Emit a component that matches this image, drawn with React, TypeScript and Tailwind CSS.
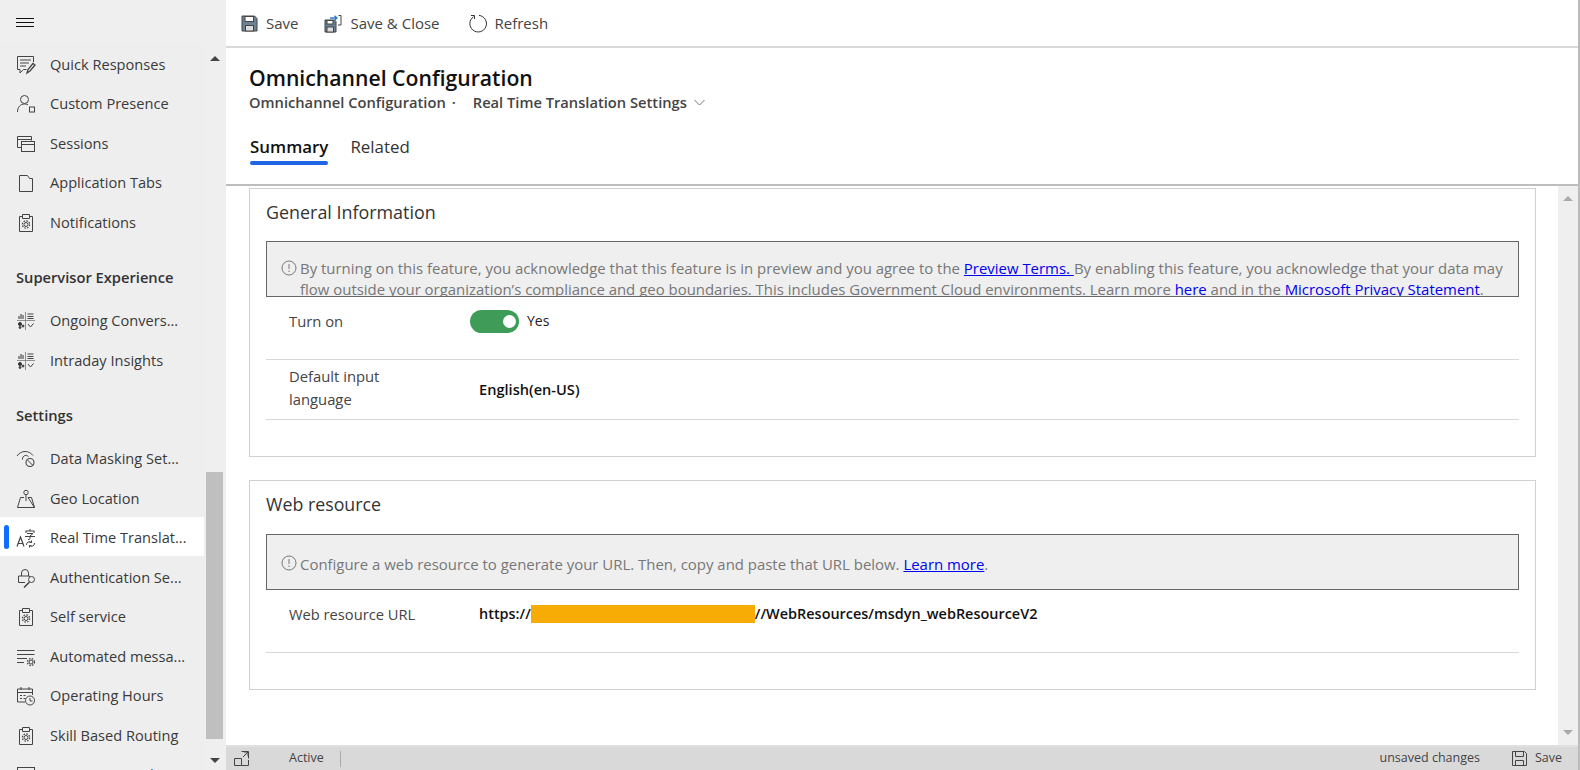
import React from "react";

const font = "font-['Open_Sans','Noto_Sans',sans-serif]";

const S = "#444";
function Ico({ children, w = 20, h = 20 }: { children: React.ReactNode; w?: number; h?: number }) {
  return (
    <svg width={w} height={h} viewBox="0 0 20 20" fill="none" stroke={S} strokeWidth="1" className="shrink-0">
      {children}
    </svg>
  );
}
const IQuick = () => (
  <Ico>
    <path d="M17.5 7V1.500H1.500v13h2.500v3.500l3.500-3.500h3" />
    <path d="M4 5h11M4 8h9M4 11h6" />
    <path d="M11 18l1-3.500 5-6 2 1.500-5 6z" strokeWidth="1.300" />
  </Ico>
);
const IPresence = () => (
  <Ico>
    <circle cx="8.500" cy="5.500" r="4" />
    <path d="M1.500 18c0-5 3-8 7-8 1.500 0 2.500.3 3.500.8" />
    <rect x="13.500" y="13" width="5" height="5" />
  </Ico>
);
const ISessions = () => (
  <Ico>
    <path d="M5.500 13.500h-4V2.500h14v4" />
    <path d="M1.500 5.500h14" />
    <rect x="5.500" y="7.500" width="13" height="10" />
    <path d="M5.500 10.500h13" />
  </Ico>
);
const ITabs = () => (
  <Ico>
    <path d="M3.500 2.500h8l2 3h3v13h-13z" />
  </Ico>
);
const IClip = () => (
  <Ico>
    <path d="M6.500 3.500h-3v15h13v-15h-3" />
    <path d="M6.500 1.500h7v4h-7z" />
    <circle cx="10" cy="11.500" r="2" />
    <circle cx="10" cy="11.500" r="3.600" strokeDasharray="1.600 1.200" strokeWidth="1.200" />
  </Ico>
);
const IGrid = () => (
  <Ico>
    <path d="M9.500 1v18M1 9.500h18" strokeWidth="0.800" stroke="#777" />
    <path d="M3 8V5M5 8V3M7 8V4M11.500 3h6M11.500 5.500h6M11.500 7.500h6" strokeWidth="1.100" />
    <circle cx="4" cy="13" r="1.600" fill="#333" />
    <circle cx="7" cy="15" r="1" fill="#333" />
    <circle cx="4" cy="16.500" r="1" fill="#333" />
    <path d="M12 13l2.500 3 3-3.500" />
  </Ico>
);
const IMask = () => (
  <Ico>
    <path d="M1 7c2-3 5-4.500 8-4.500 3.500 0 6 1.500 8 4" />
    <path d="M6.500 10.500a3.500 3.500 0 0 1 6-3" />
    <circle cx="14" cy="13.500" r="4" strokeWidth="1.100" />
    <path d="M11.200 10.700l5.600 5.600" />
  </Ico>
);
const IGeo = () => (
  <Ico>
    <circle cx="10" cy="3.500" r="2.200" />
    <path d="M10 5.700V12M1.500 18.500l3-10h3.500M12 8.500h3.500l3 10zM1.500 18.500h17" />
  </Ico>
);
const ITranslate = () => (
  <Ico>
    <path d="M1 18.500l3.500-9.500 3.500 9.500M2.300 15.500h4.500" strokeWidth="1.200" />
    <path d="M9.500 3h9M14 1v2M10 3v2M18 3v2M11 5.500h6l-3 2.500v2.500c0 .8-.5 1-2 1M9 8.500h10" strokeWidth="1" />
    <path d="M10.500 17a3 3 0 0 1 5-2.500M18.500 15a3 3 0 0 1-5 2.500M15.500 12.500v2h-2M13.500 19.500v-2h2" strokeWidth="1" />
  </Ico>
);
const IAuth = () => (
  <Ico>
    <path d="M5.500 8V5a3.500 3.500 0 0 1 7 0v3" />
    <path d="M9 14.500H2.500V8h11v1" />
    <circle cx="15.500" cy="11.500" r="3" />
    <path d="M13.500 14l-5.500 5.500" strokeWidth="1.500" />
  </Ico>
);
const IAuto = () => (
  <Ico>
    <path d="M1 3.500h17.500M1 7.500h17.500M1 11.500h10M1 15.500h7" />
    <circle cx="15" cy="15" r="2" />
    <circle cx="15" cy="15" r="3.500" strokeDasharray="1.500 1.300" strokeWidth="1.300" />
  </Ico>
);
const IHours = () => (
  <Ico>
    <path d="M9 16H1.500V3h15v6" />
    <path d="M1.500 6.500h15M5 1v3M13 1v3M4 9.500h2M7.500 9.500h2M4 12.500h2M7.500 12.500h2" />
    <circle cx="14" cy="14.500" r="4.500" fill="#efefef" />
    <path d="M14 12v3h2.500" />
  </Ico>
);
const IChart = () => (
  <Ico>
    <rect x="1.500" y="2.500" width="17" height="15" />
    <path d="M4 12l4-5 3 4 5-6" />
  </Ico>
);

type Row =
  | { h: string }
  | { t: string; i: React.ReactNode; a?: boolean };
const rows: Row[] = [
  { t: "Quick Responses", i: <IQuick /> },
  { t: "Custom Presence", i: <IPresence /> },
  { t: "Sessions", i: <ISessions /> },
  { t: "Application Tabs", i: <ITabs /> },
  { t: "Notifications", i: <IClip /> },
  { h: "Supervisor Experience" },
  { t: "Ongoing Convers...", i: <IGrid /> },
  { t: "Intraday Insights", i: <IGrid /> },
  { h: "Settings" },
  { t: "Data Masking Set...", i: <IMask /> },
  { t: "Geo Location", i: <IGeo /> },
  { t: "Real Time Translat...", i: <ITranslate />, a: true },
  { t: "Authentication Se...", i: <IAuth /> },
  { t: "Self service", i: <IClip /> },
  { t: "Automated messa...", i: <IAuto /> },
  { t: "Operating Hours", i: <IHours /> },
  { t: "Skill Based Routing", i: <IClip /> },
  { t: "Sentiment Analysis", i: <IChart /> },
];

function Sidebar() {
  return (
    <aside className="w-[226px] shrink-0 h-full bg-[#efefef] flex flex-col overflow-hidden">
      <div className="h-[45px] shrink-0 pl-4 flex items-center">
        <svg width="18" height="10" viewBox="0 0 18 10" stroke="#111" strokeWidth="1">
          <path d="M0 .500h18M0 4.500h18M0 8.500h18" />
        </svg>
      </div>
      <div className="flex flex-1 min-h-0">
        <nav className="w-[204px] shrink-0 overflow-hidden bg-[#eeeeee]">
          {rows.map((r, i) =>
            "h" in r ? (
              <div
                key={i}
                className="text-[14.700px] font-semibold text-[#333] pl-4 h-[39px] leading-[39px] mt-[15px] mb-[5px]"
              >
                {r.h}
              </div>
            ) : (
              <div
                key={i}
                className={`relative h-[39.500px] flex items-center pl-4 gap-[14px] text-[14.600px] text-[#3a3a3a] whitespace-nowrap ${
                  r.a ? "bg-white -mt-[2px] mb-[2px] pt-[4px]" : ""
                }`}
              >
                {r.a && <span className="absolute left-1 top-2 w-[5px] h-[24px] rounded-[3px] bg-[#0f6cff]" />}
                {r.i}
                <span>{r.t}</span>
              </div>
            )
          )}
        </nav>
        <div className="flex-1 flex flex-col pr-[1px]">
          <div className="mx-auto mt-[11px] w-0 h-0 border-x-[5px] border-x-transparent border-b-[5px] border-b-[#444]" />
          <div className="mt-[411px] w-[17px] ml-[2px] h-[267px] bg-[#bfbfbf]" />
          <div className="mx-auto mt-[19px] w-0 h-0 border-x-[5px] border-x-transparent border-t-[5px] border-t-[#444]" />
        </div>
      </div>
    </aside>
  );
}

function Toolbar() {
  const item = "flex items-center gap-[8px] text-[15px] text-[#444]";
  return (
    <div className="h-[46px] shrink-0 flex items-center pl-[15px] pt-[1px] gap-[26px]">
      <div className={item}>
        <svg width="17" height="17" viewBox="0 0 17 17" fill="none">
          <path d="M1 1h12.500L16 3.500V16H1z" fill="#6b8196" stroke="#444" />
          <rect x="4" y="1.500" width="8.500" height="5" fill="#fff" stroke="#444" />
          <rect x="4.500" y="10.500" width="8" height="5.500" fill="#ddd" stroke="#444" />
        </svg>
        <span>Save</span>
      </div>
      <div className={item}>
        <svg width="18" height="18" viewBox="0 0 18 18" fill="none">
          <path d="M1 5h9.500L12 6.500V17H1z" fill="#6b8196" stroke="#444" />
          <rect x="3" y="5.500" width="6" height="3.500" fill="#fff" stroke="#444" />
          <rect x="3" y="12" width="6.500" height="5" fill="#ddd" stroke="#444" />
          <path d="M6 3h7M10.500 .8L13 3l-2.500 2.200" stroke="#2b7cd3" strokeWidth="1.300" />
          <path d="M14.500 .500H17V10h-3" stroke="#444" />
        </svg>
        <span>Save &amp; Close</span>
      </div>
      <div className={`${item} ml-[2px]`}>
        <svg width="19" height="19" viewBox="0 0 19 19" fill="none" stroke="#333" strokeWidth="1">
          <path d="M5.500 2.800A8.300 8.300 0 1 0 11 1.400" />
          <path d="M3 1.500h3.500V5" />
        </svg>
        <span>Refresh</span>
      </div>
    </div>
  );
}

function Header() {
  return (
    <div className="h-[140px] shrink-0 border-t-[2px] border-[#d8d8d8] border-b-[2px] border-b-[#bdbdbd] pl-[23px] flex flex-col">
      <div className="mt-[15px] h-[29px] leading-[30px] text-[21.200px] font-semibold text-[#111]">Omnichannel Configuration</div>
      <div className="h-[20px] leading-[20px] flex items-center text-[14.700px] font-semibold text-[#444]">
        <span>Omnichannel Configuration</span>
        <span className="ml-[6px]">·</span>
        <span className="ml-[17px]">Real Time Translation Settings</span>
        <svg className="ml-[7px]" width="11" height="7" viewBox="0 0 11 7" fill="none" stroke="#777">
          <path d="M.5 1l5 5 5-5" />
        </svg>
      </div>
      <div className="mt-[22px] ml-[1px] flex gap-[22px] text-[16.900px]">
        <div className="flex flex-col">
          <span className="h-[26px] leading-[26px] font-semibold text-[#111]">Summary</span>
          <span className="mt-[1px] h-[4px] rounded-[2px] bg-[#1f66e5]" />
        </div>
        <span className="h-[26px] leading-[26px] text-[#333]">Related</span>
      </div>
    </div>
  );
}

function Notice({ children, h, pt, iconTop }: { children: React.ReactNode; h: string; pt: string; iconTop: string }) {
  return (
    <div className={`mx-[16px] border border-[#666] bg-[#efefef] overflow-hidden text-[14.950px] leading-[21px] text-[#777] pl-[33px] pr-[4px] relative shrink-0 ${h} ${pt}`}>
      <svg className={`absolute left-[14px] ${iconTop}`} width="16" height="16" viewBox="0 0 16 16" fill="none" stroke="#777">
        <circle cx="8" cy="8" r="7" />
        <path d="M8 4v5M8 10.500v1.500" />
      </svg>
      {children}
    </div>
  );
}

const link = "text-[#0000ee] underline";

function Card1() {
  return (
    <section className="h-[269px] border border-[#d0d0d0] flex flex-col shrink-0">
      <h2 className="h-[52px] shrink-0 pl-[16px] pt-[8px] leading-[30px] text-[17.900px] text-[#333]">General Information</h2>
      <Notice h="h-[56px]" pt="pt-[16px]" iconTop="top-[18px]">
        By turning on this feature, you acknowledge that this feature is in preview and you agree to the{" "}
        <a className={link}>Preview Terms. </a>By enabling this feature, you acknowledge that your data may flow outside
        your organization’s compliance and geo boundaries. This includes Government Cloud environments. Learn more{" "}
        <a className={link}>here</a> and in the <a className={link}>Microsoft Privacy Statement</a>.
      </Notice>
      <div className="mx-[16px] h-[63px] border-b border-[#d8d8d8] flex items-start pt-[14px] text-[14.800px] leading-[20px] text-[#444]">
        <span className="w-[204px] pl-[23px]">Turn on</span>
        <span className="-mt-[1px] w-[49px] h-[23px] rounded-full bg-[#3f9c58] flex items-center justify-end pr-[3px]">
          <span className="w-[13px] h-[13px] rounded-full bg-white" />
        </span>
        <span className="ml-[8px] text-[14px] text-[#222]">Yes</span>
      </div>
      <div className="mx-[16px] h-[60px] border-b border-[#d8d8d8] flex items-center text-[14.800px]">
        <span className="w-[213px] pl-[23px] pr-[80px] pb-[4px] leading-[23px] text-[#444]">Default input language</span>
        <span className="text-[14.600px] font-semibold text-[#111]">English(en-US)</span>
      </div>
    </section>
  );
}

function Card2() {
  return (
    <section className="mt-[23px] h-[210px] border border-[#d0d0d0] flex flex-col shrink-0">
      <h2 className="h-[53px] shrink-0 pl-[16px] pt-[8px] leading-[30px] text-[17.800px] text-[#333]">Web resource</h2>
      <Notice h="h-[56px]" pt="pt-[19px]" iconTop="top-[20px]">
        Configure a web resource to generate your URL. Then, copy and paste that URL below. <a className={link}>Learn more</a>.
      </Notice>
      <div className="mx-[16px] h-[63px] border-b border-[#d8d8d8] flex items-start pt-[13px] text-[14.700px]">
        <span className="w-[213px] pl-[23px] text-[#444]">Web resource URL</span>
        <span className="text-[14.450px] font-semibold text-[#111] flex items-center">
          https://
          <span className="inline-block w-[224px] h-[18px] bg-[#f7ab05] mx-0" />
          //WebResources/msdyn_webResourceV2
        </span>
      </div>
    </section>
  );
}

function StatusBar() {
  return (
    <div className="h-[25px] shrink-0 border-t-[2px] border-[#e0e0e0] bg-[#d9d9d9] flex items-center text-[12.500px] text-[#444]">
      <svg className="ml-[8px]" width="15" height="15" viewBox="0 0 15 15" fill="none" stroke="#444">
        <path d="M.5 7.500h7v7h-7zM7.500 .5h7v7M7.500 14.500h7V9M9 6l5-5M10 1h4v4" />
      </svg>
      <span className="ml-[40px]">Active</span>
      <span className="ml-[16px] w-px h-[16px] bg-[#aaa]" />
      <span className="ml-auto">unsaved changes</span>
      <svg className="ml-[32px]" width="15" height="15" viewBox="0 0 15 15" fill="none" stroke="#444">
        <path d="M.5 .5h12l2 2v12H.5z" />
        <path d="M3.500 .5v5h8v-5M3.500 14.500v-5h8v5" />
      </svg>
      <span className="ml-[8px] mr-[16px]">Save</span>
    </div>
  );
}

export default function App() {
  return (
    <div className={`${font} w-[1580px] h-[770px] flex overflow-hidden bg-white`}>
      <Sidebar />
      <main className="flex-1 min-w-0 h-full flex flex-col border-r-[2px] border-r-[#bbb]">
        <Toolbar />
        <Header />
        <div className="flex flex-1 min-h-0">
          <div className="flex-1 min-w-0 pl-[23px] pr-[22px] pt-[2px]">
            <Card1 />
            <Card2 />
          </div>
          <div className="w-[20px] bg-[#efefef] flex flex-col items-center justify-between py-[10px] shrink-0">
            <div className="w-0 h-0 border-x-[5px] border-x-transparent border-b-[5px] border-b-[#aaa]" />
            <div className="w-0 h-0 border-x-[5px] border-x-transparent border-t-[5px] border-t-[#aaa]" />
          </div>
        </div>
        <StatusBar />
      </main>
    </div>
  );
}
